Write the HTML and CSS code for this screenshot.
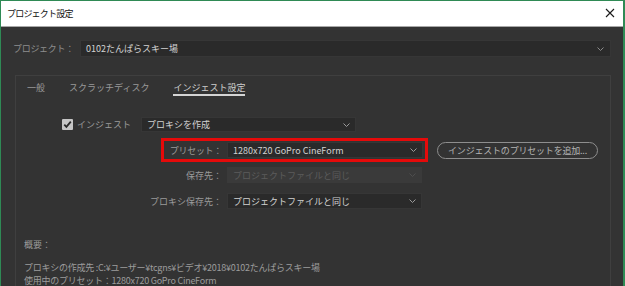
FILE: index.html
```html
<!DOCTYPE html>
<html lang="ja">
<head>
<meta charset="utf-8">
<title>プロジェクト設定</title>
<link rel="stylesheet" href="styles.css">
</head>
<body>
<div class="window">
  <div class="titlebar">
    <span class="title">プロジェクト設定</span>
    <svg class="close" width="10" height="10" viewBox="0 0 10 10"><path d="M1 1 L9 9 M9 1 L1 9" stroke="#1a1a1a" stroke-width="1.1" fill="none"/></svg>
  </div>
  <div class="content">
    <div class="project-row">
      <span class="project-label">プロジェクト：</span>
      <div class="select project-select">
        <span class="value">0102たんぱらスキー場</span>
        <svg class="chev" width="7" height="4" viewBox="0 0 7 4"><path d="M0.5 0.5 L3.5 3.5 L6.5 0.5" stroke="#8a8a8a" stroke-width="1" fill="none"/></svg>
      </div>
    </div>
    <div class="panel">
      <div class="tabs">
        <span class="tab">一般</span>
        <span class="tab">スクラッチディスク</span>
        <span class="tab active">インジェスト設定</span>
      </div>
      <div class="ingest-row">
        <span class="checkbox"><svg width="11" height="11" viewBox="0 0 11 11"><path d="M2.3 5.6 L4.4 7.8 L8.8 2.6" stroke="#2a2a2a" stroke-width="1.8" fill="none"/></svg></span>
        <span class="check-label">インジェスト</span>
        <div class="select ingest-select">
          <span class="value">プロキシを作成</span>
          <svg class="chev" width="7" height="4" viewBox="0 0 7 4"><path d="M0.5 0.5 L3.5 3.5 L6.5 0.5" stroke="#9a9a9a" stroke-width="1" fill="none"/></svg>
        </div>
      </div>
      <div class="preset-row">
        <div class="highlight">
          <span class="hl-label">プリセット：</span>
          <div class="select preset-select">
            <span class="value">1280x720 GoPro CineForm</span>
            <svg class="chev" width="7" height="4" viewBox="0 0 7 4"><path d="M0.5 0.5 L3.5 3.5 L6.5 0.5" stroke="#9a9a9a" stroke-width="1" fill="none"/></svg>
          </div>
        </div>
        <button class="pill">インジェストのプリセットを追加...</button>
      </div>
      <div class="field-row first">
        <span class="field-label">保存先：</span>
        <div class="select field-select disabled">
          <span class="value">プロジェクトファイルと同じ</span>
          <svg class="chev" width="7" height="4" viewBox="0 0 7 4"><path d="M0.5 0.5 L3.5 3.5 L6.5 0.5" stroke="#4e4e4e" stroke-width="1" fill="none"/></svg>
        </div>
      </div>
      <div class="field-row second">
        <span class="field-label">プロキシ保存先：</span>
        <div class="select field-select">
          <span class="value">プロジェクトファイルと同じ</span>
          <svg class="chev" width="7" height="4" viewBox="0 0 7 4"><path d="M0.5 0.5 L3.5 3.5 L6.5 0.5" stroke="#9a9a9a" stroke-width="1" fill="none"/></svg>
        </div>
      </div>
      <div class="summary">
        <div class="summary-title">概要：</div>
        <div class="summary-line first-line">プロキシの作成先 :C:¥ユーザー¥tcgns¥ビデオ¥2018¥0102たんぱらスキー場</div>
        <div class="summary-line">使用中のプリセット：1280x720 GoPro CineForm</div>
      </div>
    </div>
  </div>
</div>
</body>
</html>
```

FILE: styles.css
```css
* { box-sizing: border-box; }

html, body {
  margin: 0;
  padding: 0;
  width: 625px;
  height: 286px;
  overflow: hidden;
  background: #2f8a55;
  font-family: "Noto Sans CJK JP", "Noto Sans", sans-serif;
  font-size: 9px;
}

.window {
  margin: 1px 2px 0 1px;
  height: 285px;
  overflow: hidden;
  background: #333333;
  display: flex;
  flex-direction: column;
}

.titlebar {
  height: 26px;
  flex: none;
  background: #ffffff;
  border-bottom: 1px solid #a8a8a8;
  display: flex;
  align-items: center;
  justify-content: space-between;
  padding: 0 8px 1px 6px;
}

.title {
  color: #111;
  font-size: 9px;
  letter-spacing: -0.8px;
}

.close { display: block; }

.content {
  flex: 1;
  padding: 13px 12px 0 12px;
  display: flex;
  flex-direction: column;
}

.project-row {
  display: flex;
  align-items: center;
  height: 17px;
}

.project-label {
  width: 67px;
  color: #8e8e8e;
  letter-spacing: -0.3px;
}

.select {
  display: flex;
  align-items: center;
  justify-content: space-between;
  background: #2a2a2a;
  border: 1px solid #363636;
  color: #d2d2d2;
  padding: 0 5px 0 5px;
  white-space: nowrap;
}

.select .chev { flex: none; }

.project-select {
  flex: 1;
  height: 17px;
  padding-right: 6px;
}

.panel {
  margin: 18px 0 0 2px;
  flex: 1;
  border: 1px solid #3f3f3f;
  border-bottom: none;
}

.tabs {
  display: flex;
  gap: 24px;
  padding: 5px 0 0 11px;
}

.tab {
  color: #9a9a9a;
  line-height: 13px;
  border-bottom: 2px solid transparent;
}

.tab.active {
  color: #cfcfcf;
  border-bottom-color: #d4d4d4;
}

.ingest-row {
  display: flex;
  align-items: center;
  margin: 21px 0 0 46px;
  height: 15px;
}

.checkbox {
  width: 11px;
  height: 11px;
  background: #c6c6c6;
  border-radius: 1px;
  display: block;
}

.checkbox svg { display: block; }

.check-label {
  color: #9a9a9a;
  margin-left: 4px;
  width: 64px;
}

.ingest-select {
  width: 215px;
  height: 15px;
}

.preset-row {
  display: flex;
  align-items: center;
  margin: 6px 0 0 145px;
}

.highlight {
  width: 267px;
  height: 24px;
  border: 3px solid #e50a0a;
  display: flex;
  align-items: center;
  padding: 0 2px 0 0;
}

.hl-label {
  width: 63px;
  text-align: right;
  padding-right: 5px;
  color: #9a9a9a;
  letter-spacing: -0.3px;
}

.preset-select {
  width: 196px;
  height: 16px;
}

.pill {
  margin-left: 9px;
  width: 161px;
  height: 17px;
  border: 1px solid #8e8e8e;
  border-radius: 9px;
  background: transparent;
  color: #b4b4b4;
  font-family: inherit;
  font-size: 9px;
  padding: 0;
  white-space: nowrap;
  letter-spacing: -0.2px;
}

.field-row {
  display: flex;
  align-items: center;
  height: 16px;
}

.field-row.first { margin-top: 5px; }
.field-row.second { margin-top: 10px; }

.field-label {
  width: 211px;
  text-align: right;
  padding-right: 5px;
  color: #9a9a9a;
}

.field-select {
  width: 195px;
  height: 16px;
}

.select.disabled {
  background: #3a3a3a;
  border-color: #3a3a3a;
  color: #5c5c5c;
}

.summary {
  margin-top: 29px;
  padding-left: 8px;
  color: #9c9c9c;
}

.summary-title { line-height: 13px; }

.summary-line {
  line-height: 13px;
  white-space: nowrap;
  letter-spacing: -0.25px;
}

.summary-line.first-line { margin-top: 10px; }
```
